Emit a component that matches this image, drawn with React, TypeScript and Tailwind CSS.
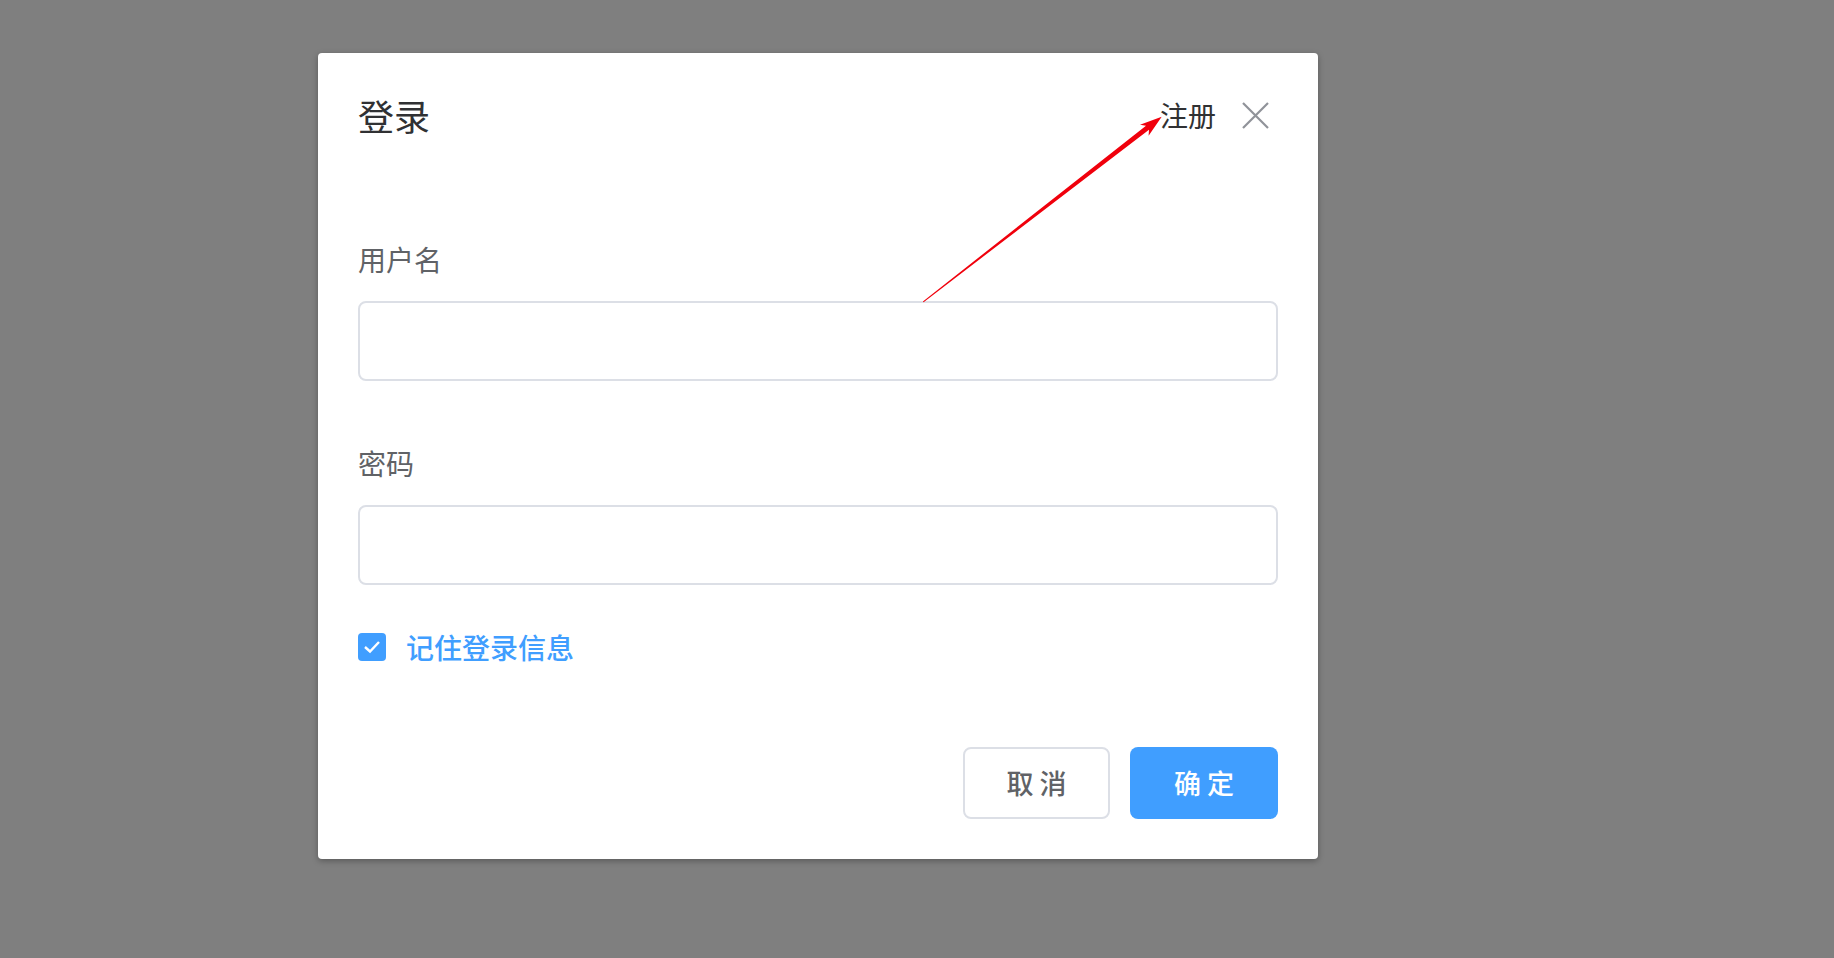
import React, { useState } from "react";

const cjk = { fontFamily: '"Noto Sans CJK SC", "Noto Sans", sans-serif' };

// red pointer drawn over the dialog, aimed at the sign-up link
const Pointer = () => (
  <svg
    className="absolute left-0 top-0 pointer-events-none"
    width={1834}
    height={958}
    viewBox="0 0 1834 958"
  >
    <polygon
      points="923.6,302.2 1149,129.7 1148.6,135.7 1161.7,116.7 1140,124.7 1146,125.7 922.9,301.4"
      fill="#f0000c"
    />
  </svg>
);

const Field = ({ label, type, top }: { label: string; type: string; top: string }) => (
  <div className={top}>
    <label className="block text-[28px] leading-[28px] text-[#606266]">{label}</label>
    <input
      type={type}
      className="mt-[28px] block h-[80px] w-full rounded-[8px] border-2 border-[#dcdfe6] bg-white px-5 text-[26px] text-[#606266] outline-none"
    />
  </div>
);

export default function App() {
  const [remember, setRemember] = useState(true);

  return (
    <div className="relative h-screen w-full overflow-hidden bg-[#7f7f7f]" style={cjk}>
      <div className="pl-[318px] pt-[53px]">
        <div className="w-[1000px] rounded-[4px] bg-white px-10 pt-10 pb-10 shadow-[0_2px_6px_rgba(0,0,0,0.3)]">
          <div className="flex h-[44px] items-center justify-between">
            <h2 className="text-[36px] leading-[44px] text-[#303133]">登录</h2>
            <div className="flex items-center">
              <a className="text-[28px] leading-[44px] text-[#303133] cursor-pointer">注册</a>
              <button className="ml-[25px] mr-[9px] flex h-[28px] w-[28px] items-center justify-center">
                <svg width="27" height="27" viewBox="0 0 27 27">
                  <path d="M1 1 L26 26 M26 1 L1 26" stroke="#909399" strokeWidth="2.2" fill="none" />
                </svg>
              </button>
            </div>
          </div>

          <Field label="用户名" type="text" top="mt-[108px]" />
          <Field label="密码" type="password" top="mt-[68px]" />

          <div
            className="mt-[48px] flex h-[28px] cursor-pointer items-center"
            onClick={() => setRemember(!remember)}
          >
            <span
              className={
                remember
                  ? "flex h-[28px] w-[28px] items-center justify-center rounded-[4px] bg-[#409eff]"
                  : "flex h-[28px] w-[28px] items-center justify-center rounded-[4px] border-2 border-[#dcdfe6] bg-white"
              }
            >
              {remember && (
                <svg width="20" height="20" viewBox="0 0 20 20">
                  <path d="M3 10 L8 14.5 L17 5" stroke="#fff" strokeWidth="2.4" fill="none" />
                </svg>
              )}
            </span>
            <span
              className={
                remember
                  ? "ml-[20px] text-[28px] leading-[28px] font-medium text-[#409eff]"
                  : "ml-[20px] text-[28px] leading-[28px] font-medium text-[#606266]"
              }
            >
              记住登录信息
            </span>
          </div>

          <div className="mt-[86px] flex justify-end gap-[20px]">
            <button className="h-[72px] w-[147px] rounded-[8px] border-2 border-[#dcdfe6] bg-white text-[27px] font-medium text-[#606266]">
              取 消
            </button>
            <button className="h-[72px] w-[148px] rounded-[8px] bg-[#409eff] text-[27px] font-medium text-white">
              确 定
            </button>
          </div>
        </div>
      </div>
      <Pointer />
    </div>
  );
}
